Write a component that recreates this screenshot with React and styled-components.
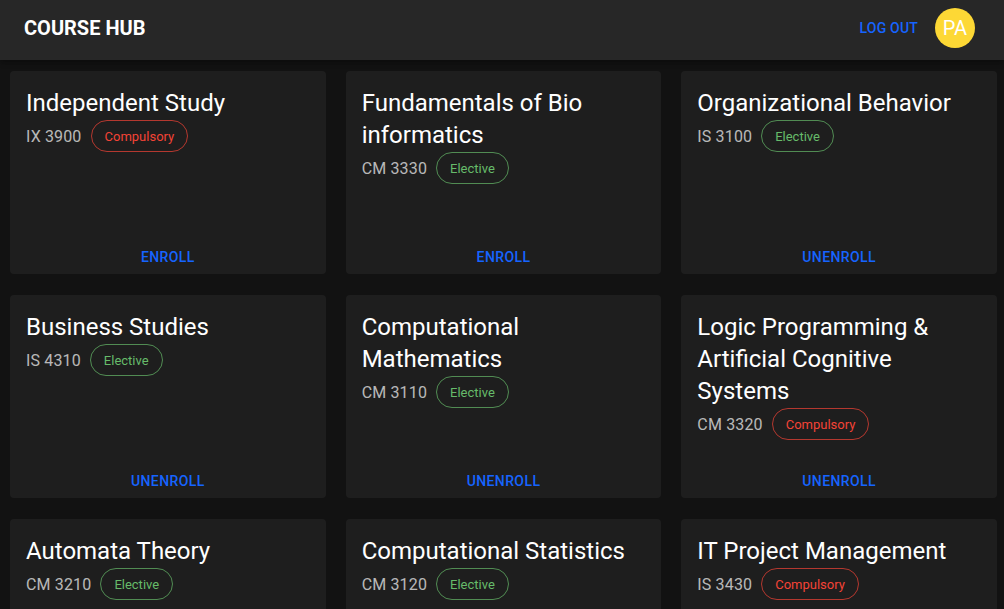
import React from "react";
import styled, { createGlobalStyle } from "styled-components";

const Global = createGlobalStyle`
  html, body { margin: 0; padding: 0; background: #121212; }
  body { font-family: Roboto, "Noto Sans", "Liberation Sans", sans-serif; color: #fff; overflow: hidden; }
  * { box-sizing: border-box; }
`;

const Bar = styled.header`
  height: 60px;
  background: #272727;
  display: flex;
  align-items: center;
  padding: 0 29px 0 24px;
  box-shadow: 0 2px 4px -1px rgba(0,0,0,0.2), 0 4px 5px 0 rgba(0,0,0,0.14);
  position: relative;
  z-index: 1;
`;

const Brand = styled.div`
  font-size: 20px;
  font-weight: 700;
  flex: 1;
  margin-top: -4px;
`;

const LogOut = styled.button`
  background: none;
  border: none;
  color: #1664ff;
  font-family: inherit;
  font-size: 14px;
  font-weight: 500;
  letter-spacing: 0.2px;
  text-transform: uppercase;
  padding: 0;
  margin-right: 17px;
  margin-top: -5px;
  cursor: pointer;
`;

const Avatar = styled.div`
  width: 40px;
  height: 40px;
  border-radius: 50%;
  background: #fdd835;
  color: #fff;
  font-size: 20px;
  display: flex;
  align-items: center;
  justify-content: center;
  margin-top: -5px;
`;

const Grid = styled.main`
  display: grid;
  grid-template-columns: repeat(3, 1fr);
  column-gap: 20px;
  row-gap: 21px;
  padding: 11px 7px 0 10px;
`;

const Card = styled.div`
  background: #1e1e1e;
  border-radius: 4px;
  height: 203px;
  display: flex;
  flex-direction: column;
  padding: 16px 16px 0;
`;

const Title = styled.h2`
  margin: 0;
  font-size: 24px;
  font-weight: 400;
  line-height: 32px;
  color: #fff;
`;

const Meta = styled.div`
  display: flex;
  align-items: center;
  gap: 9px;
  height: 32px;
  margin-top: 1px;
`;

const Code = styled.span`
  font-size: 16px;
  letter-spacing: 0.15px;
  color: rgba(255,255,255,0.7);
`;

const Chip = styled.span`
  height: 32px;
  border-radius: 16px;
  padding: 0 13px;
  display: inline-flex;
  align-items: center;
  font-size: 13px;
  color: ${p => (p.$kind === "Elective" ? "#66bb6a" : "#f44336")};
  border: 1px solid ${p => (p.$kind === "Elective" ? "rgba(102,187,106,0.7)" : "rgba(244,67,54,0.7)")};
`;

const Actions = styled.div`
  margin-top: auto;
  height: 36px;
  padding-top: 2px;
  display: flex;
  justify-content: center;
  align-items: center;
`;

const Action = styled.button`
  background: none;
  border: none;
  color: #1664ff;
  font-family: inherit;
  font-size: 14px;
  font-weight: 500;
  letter-spacing: 0.4px;
  text-transform: uppercase;
  padding: 0;
  cursor: pointer;
`;

const courses = [
  { title: "Independent Study", code: "IX 3900", kind: "Compulsory", action: "Enroll" },
  { title: "Fundamentals of Bio informatics", code: "CM 3330", kind: "Elective", action: "Enroll" },
  { title: "Organizational Behavior", code: "IS 3100", kind: "Elective", action: "Unenroll" },
  { title: "Business Studies", code: "IS 4310", kind: "Elective", action: "Unenroll" },
  { title: "Computational Mathematics", code: "CM 3110", kind: "Elective", action: "Unenroll" },
  { title: "Logic Programming & Artificial Cognitive Systems", code: "CM 3320", kind: "Compulsory", action: "Unenroll" },
  { title: "Automata Theory", code: "CM 3210", kind: "Elective", action: "Unenroll" },
  { title: "Computational Statistics", code: "CM 3120", kind: "Elective", action: "Unenroll" },
  { title: "IT Project Management", code: "IS 3430", kind: "Compulsory", action: "Unenroll" },
];

export default function App() {
  return (
    <>
      <Global />
      <Bar>
        <Brand>COURSE HUB</Brand>
        <LogOut>Log out</LogOut>
        <Avatar>PA</Avatar>
      </Bar>
      <Grid>
        {courses.map(c => (
          <Card key={c.code}>
            <Title>{c.title}</Title>
            <Meta>
              <Code>{c.code}</Code>
              <Chip $kind={c.kind}>{c.kind}</Chip>
            </Meta>
            <Actions>
              <Action>{c.action}</Action>
            </Actions>
          </Card>
        ))}
      </Grid>
    </>
  );
}
